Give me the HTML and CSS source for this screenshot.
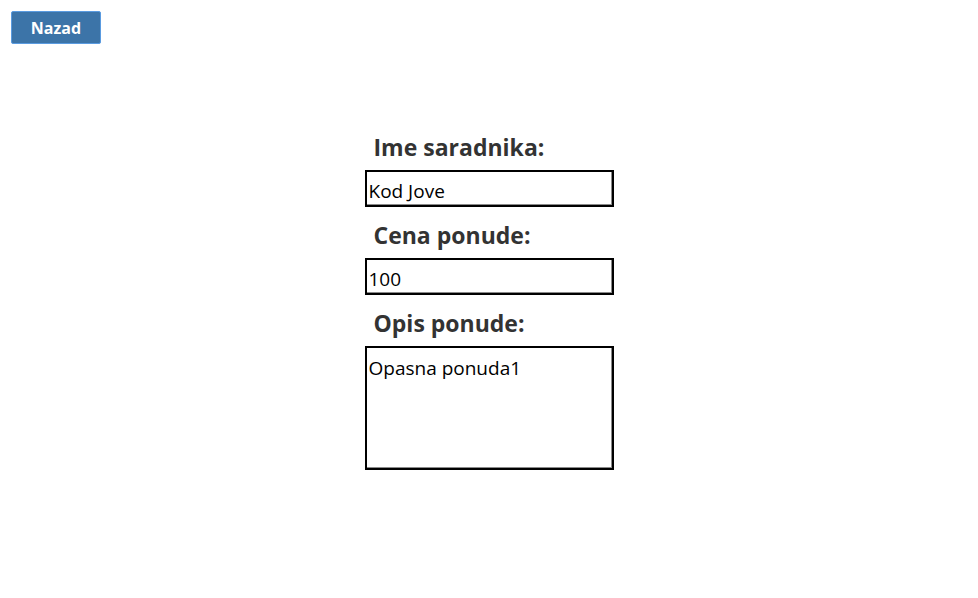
FILE: index.html
```html
<!DOCTYPE html>
<html>
<head>
<meta charset="utf-8">
<link rel="stylesheet" href="styles.css">
</head>
<body>
<div class="top">
  <button class="back">Nazad</button>
</div>
<form class="form">
  <label class="label">Ime saradnika:</label>
  <input class="field" type="text" value="Kod Jove">
  <label class="label">Cena ponude:</label>
  <input class="field" type="text" value="100">
  <label class="label">Opis ponude:</label>
  <textarea class="field area">Opasna ponuda1</textarea>
</form>
</body>
</html>
```
FILE: styles.css
```css
html, body {
  margin: 0;
  padding: 0;
  background: #fff;
}
body {
  font-family: "Open Sans", "Noto Sans", sans-serif;
}
.top {
  padding: 11px 0 0 11px;
  height: 44px;
  box-sizing: border-box;
}
.back {
  width: 90px;
  height: 33px;
  background: #3c74a8;
  border: 1px solid #5a9be0;
  border-radius: 2px;
  color: #fff;
  font-family: "Open Sans", sans-serif;
  font-weight: 700;
  font-size: 16px;
  padding: 0;
  display: block;
}
.form {
  width: 249px;
  margin: 75px auto 0;
  display: flex;
  flex-direction: column;
}
.label {
  display: block;
  padding: 12px 0 7px 9px;
  line-height: 32px;
  font-size: 23px;
  font-weight: 700;
  color: #333;
}
.field {
  box-sizing: border-box;
  width: 249px;
  height: 37px;
  border: 2px solid #000;
  box-shadow: inset -1px -1px 0 #8a8a8a;
  margin: 0;
  padding: 4px 0 0 2px;
  font-family: "Open Sans", sans-serif;
  font-size: 19px;
  color: #000;
  outline: none;
  background: #fff;
}
.area {
  height: 124px;
  padding-top: 7px;
  resize: none;
  line-height: 26px;
}
```
